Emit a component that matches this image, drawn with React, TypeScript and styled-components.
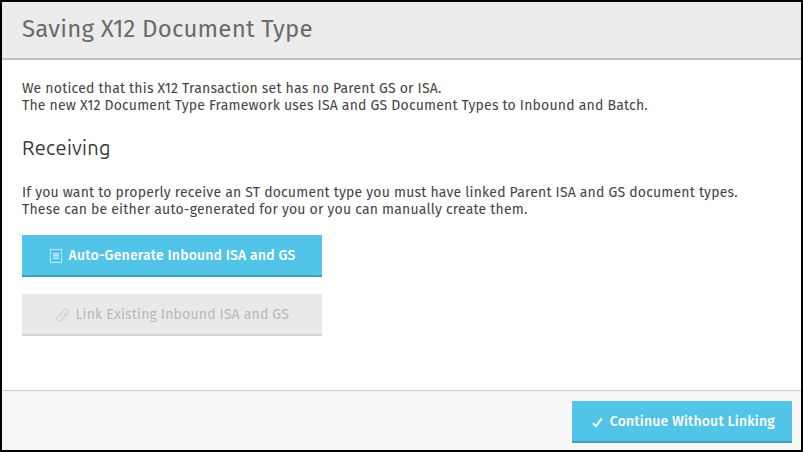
import React from 'react';
import styled, { createGlobalStyle } from 'styled-components';

const GlobalStyle = createGlobalStyle`
  * { box-sizing: border-box; }
  body { margin: 0; background: #fff; }
`;

const Dialog = styled.main`
  display: flex;
  flex-direction: column;
  width: 803px;
  height: 452px;
  border: 2px solid #000;
  background: #fff;
  color: #444;
  font: 14px/17px 'Fira Sans', 'Open Sans', sans-serif;
  letter-spacing: 0.2px;
`;

const Header = styled.header`
  flex: none;
  height: 58px;
  padding: 10px 20px 0;
  background: #ececec;
  border-bottom: 2px solid #bfbfbf;
`;

const Title = styled.h1`
  margin: 0;
  color: #6b6b6b;
  font-size: 24px;
  line-height: 34px;
  font-weight: 400;
  white-space: nowrap;
`;

const Content = styled.section`
  flex: 1;
  padding: 20px 20px 0;
`;

const Paragraph = styled.p`
  margin: 0;
  white-space: nowrap;
`;

const Heading = styled.h2`
  margin: 21px 0 23px;
  color: #383838;
  font: 400 20px/26px Ubuntu, 'Noto Sans', sans-serif;
  letter-spacing: 0.3px;
`;

const Actions = styled.div`
  display: flex;
  flex-direction: column;
  gap: 17px;
  width: 300px;
  margin-top: 17px;
`;

const Button = styled.button<{ $width: number; $indent: number; $gap: number }>`
  display: flex;
  align-items: center;
  gap: ${({ $gap }) => $gap}px;
  width: ${({ $width }) => $width}px;
  height: 42px;
  padding: 0 0 2px ${({ $indent }) => $indent}px;
  border: 0;
  background: #52c4e7;
  box-shadow: inset 0 -2px #429fbb;
  color: #fff;
  font: 500 14px/17px 'Fira Sans', 'Open Sans', sans-serif;
  letter-spacing: 0.18px;
  white-space: nowrap;

  &:disabled {
    background: #e9e9e9;
    box-shadow: inset 0 -2px #d2d2d2;
    color: #b8b8b8;
    font-weight: 400;
  }

  svg { flex: none; position: relative; top: 1px; }
`;

const Footer = styled.footer`
  display: flex;
  justify-content: flex-end;
  flex: none;
  height: 60px;
  padding: 10px 9px 0 0;
  border-top: 1px solid #c9c9c9;
  background: #f7f7f7;
`;

const DocumentIcon = () => (
  <svg width="12" height="14" viewBox="0 0 12 14" fill="none" stroke="#fff" strokeOpacity=".55">
    <path d="M.5.5h11v13H.5z" />
    <path d="M3 4.5h6M3 6.5h6M3 9.5h6" />
    <path d="M3 5.5h6M3 7.5h6M3 8.5h6" strokeOpacity=".35" />
  </svg>
);

const LinkIcon = () => (
  <svg width="14" height="14" viewBox="0 0 14 14" fill="none" stroke="#d0d0d0" strokeWidth="1.2" strokeLinecap="round">
    <path d="M5.2 8.8C4 7.8 4.2 6.2 5.2 5L7.6 2.1c1.1-1.3 2.7-1.5 3.8-.6s1.2 2.5.2 3.8L9.8 7.5" />
    <path d="M8 5.2c1.2 1 1 2.6 0 3.8l-2.4 2.9c-1.1 1.3-2.7 1.5-3.8.6S.6 10 1.6 8.7l1.8-2.2" />
  </svg>
);

const CheckIcon = () => (
  <svg width="11" height="11" viewBox="0 0 11 11" fill="none" stroke="#fff" strokeWidth="2">
    <path d="M1 6.2 4 9 9.8 1.4" />
  </svg>
);

export default function App() {
  return (
    <>
      <GlobalStyle />
      <Dialog>
        <Header>
          <Title>Saving X12 Document Type</Title>
        </Header>
        <Content>
          <Paragraph>
            We noticed that this X12 Transaction set has no Parent GS or ISA.
            <br />
            The new X12 Document Type Framework uses ISA and GS Document Types to Inbound and Batch.
          </Paragraph>
          <Heading>Receiving</Heading>
          <Paragraph>
            If you want to properly receive an ST document type you must have linked Parent ISA and GS document types.
            <br />
            These can be either auto-generated for you or you can manually create them.
          </Paragraph>
          <Actions>
            <Button $width={300} $indent={28} $gap={6.6}>
              <DocumentIcon />
              Auto-Generate Inbound ISA and GS
            </Button>
            <Button disabled $width={300} $indent={34} $gap={5.4}>
              <LinkIcon />
              Link Existing Inbound ISA and GS
            </Button>
          </Actions>
        </Content>
        <Footer>
          <Button $width={220} $indent={20} $gap={6.8}>
            <CheckIcon />
            Continue Without Linking
          </Button>
        </Footer>
      </Dialog>
    </>
  );
}
